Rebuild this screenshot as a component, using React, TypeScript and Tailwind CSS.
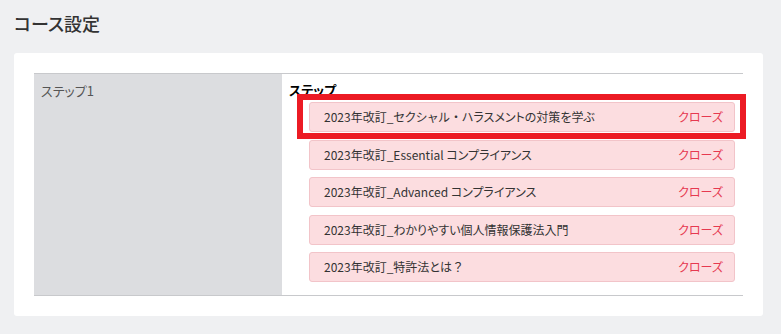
import React from "react";

const items: React.ReactNode[] = [
  <>
    2023年改訂_セクシ<span className="[font-feature-settings:normal]">ャ</span>ル<span className="[font-feature-settings:normal]">・</span>ハラスメントの対策を学ぶ
  </>,
  "2023年改訂_Essential コンプライアンス",
  "2023年改訂_Advanced コンプライアンス",
  "2023年改訂_わかりやすい個人情報保護法入門",
  <>
    2023年改訂_特許法とは<span className="[font-feature-settings:normal]">？</span>
  </>,
];

export default function App() {
  return (
    <div
      className="min-h-screen w-full bg-[#eff0f2] px-[14px] pt-[10px] text-[#333] [font-feature-settings:'palt']"
      style={{ fontFamily: '"Noto Sans CJK JP", "Noto Sans", sans-serif' }}
    >
      <h2 className="h-[26px] text-[18px] font-medium leading-[26px] text-[#333]">コース設定</h2>
      <div className="mt-[17px] w-[749px] rounded-[3px] bg-white p-[20px]">
        <div className="flex border-y border-[#c8c9cc]">
          <div className="w-[248px] shrink-0 bg-[#dcdde0] px-[7px] pt-[8px] text-[13px] leading-[18px] text-[#555]">
            ステップ1
          </div>
          <div className="flex-1 pb-[13px] pl-[7px] pr-[8px] pt-[7px]">
            <div className="text-[13px] font-bold leading-[18px] text-black">ステップ</div>
            <div className="relative ml-[20px] mt-[3px] flex flex-col gap-[7.5px]">
              {items.map((t, i) => (
                <div
                  key={i}
                  className="flex h-[30px] items-center justify-between rounded-[3px] border border-[#f2c4c9] bg-[#fcdde0] pl-[14px] pr-[11px] text-[12px] leading-[18px]"
                >
                  <span className="text-[#333]">{t}</span>
                  <span className="text-[#e63950]">クローズ</span>
                </div>
              ))}
              <div className="pointer-events-none absolute left-[-12px] right-[-11px] top-[-8px] h-[44.5px] border-[6px] border-[#ec1b24]" />
            </div>
          </div>
        </div>
      </div>
    </div>
  );
}
